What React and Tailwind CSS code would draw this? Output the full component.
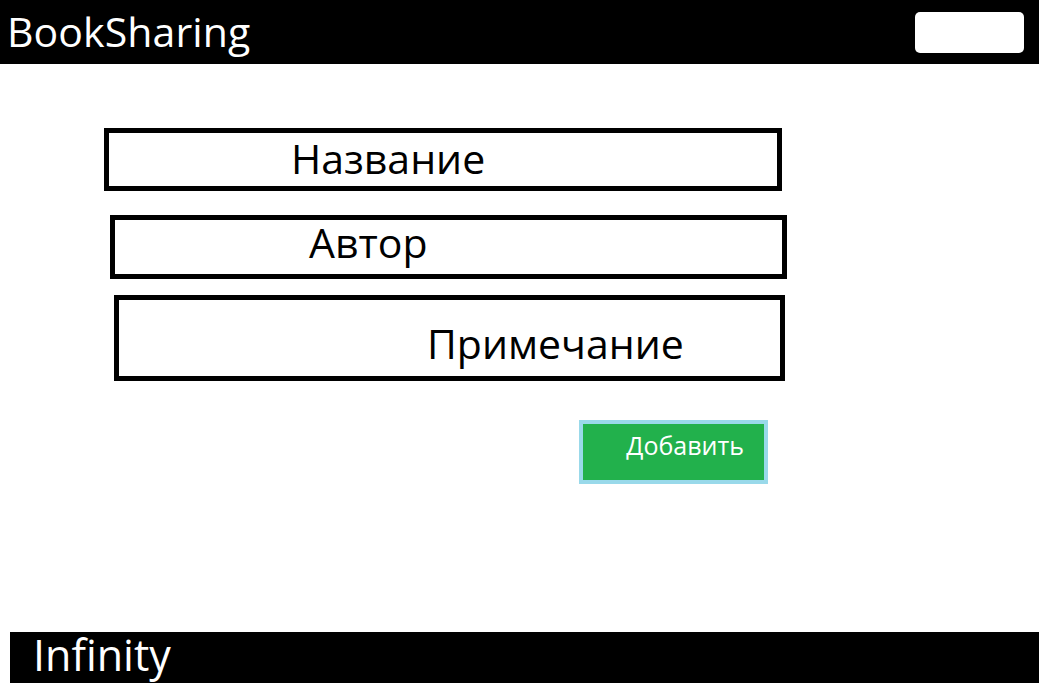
import React from 'react';

const font = { fontFamily: '"Open Sans", "Noto Sans", sans-serif' };

export default function App() {
    return (
        <div className="w-[1039px] h-[683px] bg-white flex flex-col overflow-hidden" style={font}>
            {/* Шапка */}
            <header className="h-[64px] bg-black flex items-center justify-between pl-[7px] pr-[15px]">
                <h1 className="text-white text-[41px] leading-none tracking-[0.1px] -mt-[2px]">BookSharing</h1>
                <button className="w-[109px] h-[41px] bg-white rounded-[5px]"></button>
            </header>

            <main className="flex-1 flex flex-col pt-[64px]">
                <div className="ml-[104px] w-[678px] h-[63px] border-[5px] border-black flex items-center pl-[182px]">
                    <span className="text-[41px] leading-none text-black -mt-[3px]">Название</span>
                </div>
                <div className="ml-[110px] mt-[24px] w-[677px] h-[64px] border-[5px] border-black flex items-center pl-[194px]">
                    <span className="text-[41px] leading-none text-black -mt-[10px]">Автор</span>
                </div>
                <div className="ml-[114px] mt-[16px] w-[671px] h-[86px] border-[5px] border-black flex items-end pl-[308px] pb-[12px]">
                    <span className="text-[41px] leading-none text-black">Примечание</span>
                </div>
                <button className="ml-[579px] mt-[39px] w-[189px] h-[64px] border-[4px] border-[#99d9ea] bg-[#22b14c] text-white text-[25px] leading-none flex items-start justify-end pr-[20px] pt-[9px]">
                    Добавить
                </button>
            </main>

            {/* Подвал */}
            <footer className="ml-[10px] h-[51px] bg-black flex items-start pl-[23px] pt-[1px]">
                <span className="text-white text-[43px] leading-none">Infinity</span>
            </footer>
        </div>
    );
}
